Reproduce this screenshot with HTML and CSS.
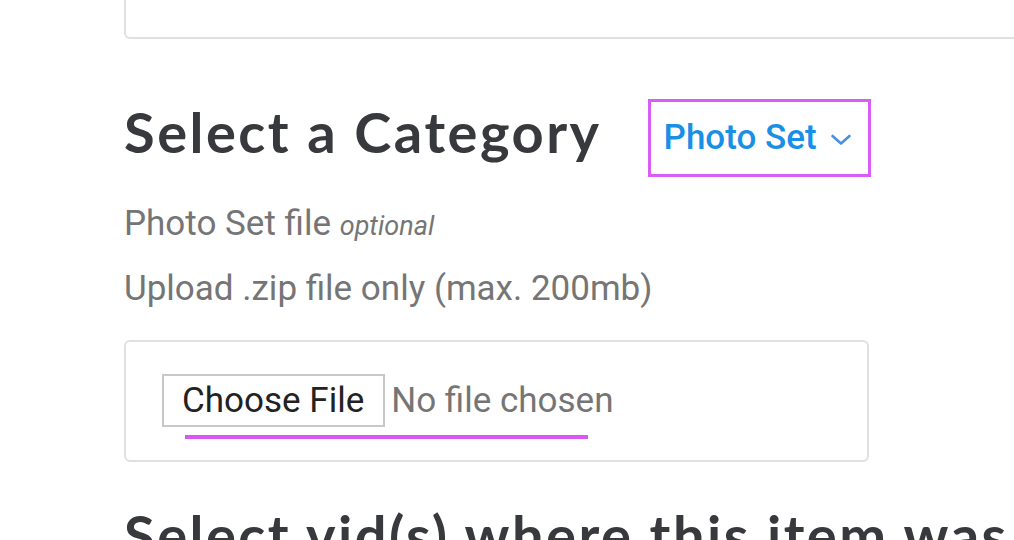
FILE: index.html
```html
<!DOCTYPE html>
<html>
<head>
<meta charset="utf-8">
<link rel="stylesheet" href="styles.css">
</head>
<body>
<div class="page">
  <div class="card-top"></div>
  <div class="cat-row">
    <h2 class="heading">Select a Category</h2>
    <div class="dropdown">
      <span class="dd-label">Photo Set</span>
      <svg class="chev" width="22" height="12" viewBox="0 0 22 12"><path d="M2.5 2 L11 9.5 L19.5 2" fill="none" stroke="#4a90e2" stroke-width="2.6" stroke-linecap="round" stroke-linejoin="round"/></svg>
    </div>
  </div>
  <p class="label">Photo Set file <em>optional</em></p>
  <p class="hint">Upload .zip file only (max. 200mb)</p>
  <div class="file-box">
    <div class="file-input">
      <span class="btn">Choose File</span>
      <span class="nofile">No file chosen</span>
    </div>
    <div class="underline"></div>
  </div>
  <h2 class="heading heading-2">Select vid(s) where this item was used</h2>
</div>
</body>
</html>
```
FILE: styles.css
```css
html, body {
  margin: 0;
  padding: 0;
  background: #fff;
  overflow: hidden;
}
body {
  font-family: Roboto, "Liberation Sans", sans-serif;
}
.page {
  padding-left: 124px;
  width: 1100px;
}
.card-top {
  height: 37px;
  border: 2px solid #e0e0e0;
  border-top: none;
  border-radius: 0 0 6px 6px;
}
.cat-row {
  display: flex;
  align-items: flex-start;
  margin-top: 59px;
}
.heading {
  margin: 0;
  font-family: Lato, "Open Sans", sans-serif;
  font-weight: 700;
  font-size: 56px;
  line-height: 1.2;
  letter-spacing: 2.5px;
  color: #37393c;
  white-space: nowrap;
}
.dropdown {
  margin-top: 1px;
  margin-left: 46px;
  height: 72px;
  border: 3px solid #d95cf6;
  display: flex;
  align-items: center;
  padding: 0 16px 0 13px;
}
.dd-label {
  font-size: 35px;
  font-weight: 500;
  color: #1a8fe6;
  line-height: 72px;
}
.chev {
  margin-left: 13px;
  margin-top: 4px;
}
.label, .hint {
  margin: 0;
  font-size: 35px;
  line-height: 40px;
  color: #757575;
}
.label {
  margin-top: 27px;
}
.label em {
  font-size: 27px;
  line-height: 1;
}
.hint {
  margin-top: 25px;
}
.file-box {
  margin-top: 31px;
  width: 705px;
  border: 2px solid #e0e0e0;
  border-radius: 6px;
  padding: 32px 0 21px 36px;
}
.file-input {
  display: flex;
  align-items: center;
}
.btn {
  display: inline-block;
  border: 2px solid #c8c8c8;
  height: 49px;
  line-height: 49px;
  padding: 0 19px 0 18px;
  font-size: 35px;
  color: #222;
}
.nofile {
  margin-left: 6px;
  font-size: 35px;
  color: #757575;
}
.underline {
  margin-top: 8px;
  margin-left: 23px;
  width: 403px;
  height: 4px;
  background: #d957f5;
}
.heading-2 {
  margin-top: 39px;
}
```
